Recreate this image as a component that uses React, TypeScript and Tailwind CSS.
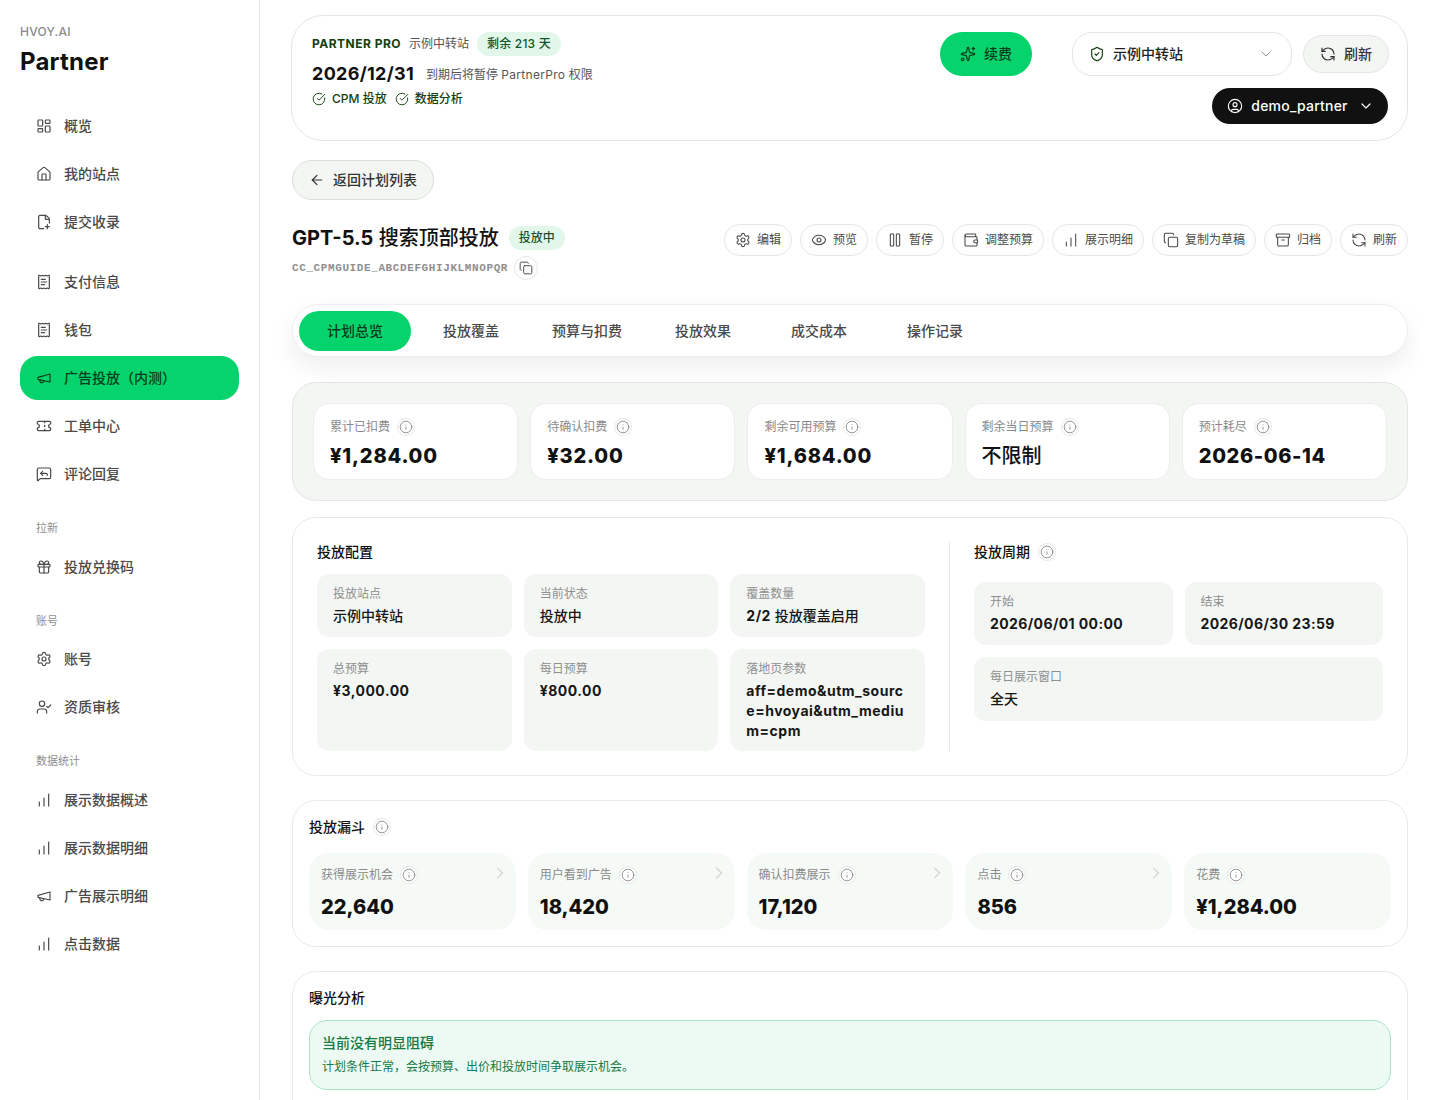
import {
	Archive,
	ArrowLeft,
	ChartNoAxesColumnIncreasing,
	ChevronDown,
	ChevronRight,
	CircleCheckBig,
	CircleUser,
	Copy,
	Eye,
	FilePlus2,
	Gift,
	House,
	Info,
	LayoutDashboard,
	MessageSquareReply,
	Pause,
	ReceiptText,
	RefreshCcw,
	Settings,
	ShieldCheck,
	Sparkles,
	Ticket,
	UserCheck,
	Wallet,
} from 'lucide-react';
import type { ComponentType, ReactNode } from 'react';

type Icon = ComponentType<{ size?: number; strokeWidth?: number; className?: string }>;

const font = "font-['Inter','Noto_Sans_CJK_SC',sans-serif]";

// older lucide megaphone, the one in the package now has a flag on it
function Horn({ size = 16, strokeWidth = 1.8 }: { size?: number; strokeWidth?: number }) {
	return (
		<svg
			width={size}
			height={size}
			viewBox="0 0 24 24"
			fill="none"
			stroke="currentColor"
			strokeWidth={strokeWidth}
			strokeLinecap="round"
			strokeLinejoin="round"
		>
			<path d="m3 11 18-5v12L3 14v-3z" />
			<path d="M11.6 16.8a3 3 0 1 1-5.8-1.6" />
		</svg>
	);
}

function NavItem({ icon: I, label, active }: { icon: Icon; label: string; active?: boolean }) {
	return (
		<div
			className={
				'flex h-11 items-center gap-3 rounded-[18px] px-4 text-sm font-medium ' +
				(active ? 'bg-[#05d36c] text-[#0a3d1c]' : 'text-[#4a4a4a]')
			}
		>
			<I size={16} strokeWidth={1.8} />
			<span>{label}</span>
		</div>
	);
}

function NavLabel({ label, className }: { label: string; className: string }) {
	return <div className={'px-4 text-[11px] leading-4 text-[#8f8f8f] ' + className}>{label}</div>;
}

function InfoDot() {
	return (
		<span className="flex h-[18px] w-[18px] shrink-0 items-center justify-center rounded-full border border-[#e6e8e6] bg-white text-[#777]">
			<Info size={14} strokeWidth={1.3} />
		</span>
	);
}

function ActionButton({ icon: I, label, w }: { icon: Icon; label: string; w: string }) {
	return (
		<button className={'flex h-8 items-center justify-center gap-1.5 rounded-full border border-[#e4e6e4] bg-white text-xs text-[#4a4a4a] ' + w}>
			<I size={16} strokeWidth={1.6} />
			<span>{label}</span>
		</button>
	);
}

function Metric({ label, value, track }: { label: string; value: string; track?: string }) {
	return (
		<div className="h-[77px] rounded-[16px] border border-[#eceeec] bg-white px-4 pt-[14px]">
			<div className="flex h-[18px] items-center gap-[7px] text-xs leading-[18px] text-[#8a8a8a]">
				<span>{label}</span>
				<InfoDot />
			</div>
			<div className={'mt-[5px] text-xl font-extrabold leading-[30px] text-[#111] ' + (track ?? 'tracking-[0.8px]')}>{value}</div>
		</div>
	);
}

function Field({ label, value, className }: { label: string; value: ReactNode; className?: string }) {
	return (
		<div className={'rounded-xl bg-[#f4f6f4] px-4 pt-[11px] ' + (className ?? 'h-[63px]')}>
			<div className="text-xs leading-[18px] text-[#8f8f8f]">{label}</div>
			<div className="mt-[3px] break-all text-sm font-medium leading-5 text-[#161616]">{value}</div>
		</div>
	);
}

function Num({ children, track }: { children: ReactNode; track?: string }) {
	return <span className={'font-bold ' + (track ?? 'tracking-[0.5px]')}>{children}</span>;
}

function Funnel({ label, value, arrow = true }: { label: string; value: string; arrow?: boolean }) {
	return (
		<div className="relative h-[77px] rounded-[20px] bg-[#f6faf7] px-3 pt-[13px]">
			<div className="flex h-[18px] items-center gap-[7px] text-xs leading-[18px] text-[#8a8a8a]">
				<span>{label}</span>
				<InfoDot />
			</div>
			<div className="mt-2 text-xl font-extrabold leading-[30px] text-[#111]">{value}</div>
			{arrow && <ChevronRight size={20} strokeWidth={1} className="absolute right-[6px] top-[10px] text-[#aaa]" />}
		</div>
	);
}

export default function App() {
	const tabs = ['计划总览', '投放覆盖', '预算与扣费', '投放效果', '成交成本', '操作记录'];

	return (
		<div className={'flex h-[1100px] overflow-hidden bg-white text-[#111] ' + font}>
			<aside className="h-full w-[260px] shrink-0 border-r border-[#e8e8e8] px-5 pt-[25px]">
				<div className="text-xs font-medium leading-[14px] tracking-[0.02em] text-[#8a8a8a]">HVOY.AI</div>
				<div className="mt-[5px] text-2xl font-bold leading-[36px] tracking-[0.2px] text-[#111]">Partner</div>
				<nav className="mt-[24px] flex flex-col gap-1">
					<NavItem icon={LayoutDashboard} label="概览" />
					<NavItem icon={House} label="我的站点" />
					<NavItem icon={FilePlus2} label="提交收录" />
					<div className="h-2" />
					<NavItem icon={ReceiptText} label="支付信息" />
					<NavItem icon={ReceiptText} label="钱包" />
					<NavItem icon={Horn} label="广告投放（内测）" active />
					<NavItem icon={Ticket} label="工单中心" />
					<NavItem icon={MessageSquareReply} label="评论回复" />
					<NavLabel label="拉新" className="mt-5 mb-[5px]" />
					<NavItem icon={Gift} label="投放兑换码" />
					<NavLabel label="账号" className="mt-5 mb-1" />
					<NavItem icon={Settings} label="账号" />
					<NavItem icon={UserCheck} label="资质审核" />
					<NavLabel label="数据统计" className="mt-5 mb-[5px]" />
					<NavItem icon={ChartNoAxesColumnIncreasing} label="展示数据概述" />
					<NavItem icon={ChartNoAxesColumnIncreasing} label="展示数据明细" />
					<NavItem icon={Horn} label="广告展示明细" />
					<NavItem icon={ChartNoAxesColumnIncreasing} label="点击数据" />
				</nav>
			</aside>

			<main className="min-w-0 flex-1 px-8 pt-[15px]">
				<header className="-ml-px flex h-[126px] justify-between rounded-[32px] border border-[#e4e6e4] bg-white pl-5 pr-[18px] pt-4">
					<div>
						<div className="flex h-6 items-center gap-2">
							<span className="text-xs font-bold tracking-[0.04em] text-[#14400f]">PARTNER PRO</span>
							<span className="text-xs text-[#555]">示例中转站</span>
							<span className="flex h-6 w-[84px] items-center justify-center rounded-full bg-[#e2f7e9] text-xs font-medium tracking-[0.2px] text-[#14532d]">剩余 213 天</span>
						</div>
						<div className="mt-[5px] flex h-[26px] items-center gap-3">
							<span className="text-lg font-bold tracking-[0.3px] text-[#111]">2026/12/31</span>
							<span className="mt-0.5 text-xs text-[#555]">到期后将暂停 <span className="tracking-[0.3px]">PartnerPro</span> 权限</span>
						</div>
						<div className="mt-[2px] flex h-5 items-center gap-2 text-xs font-medium text-[#14400f]">
							<span className="flex items-center gap-1.5"><CircleCheckBig size={14} strokeWidth={1.6} />CPM 投放</span>
							<span className="flex items-center gap-1.5"><CircleCheckBig size={14} strokeWidth={1.6} />数据分析</span>
						</div>
					</div>
					<div className="flex">
						<button className="flex h-11 w-[92px] items-center justify-center gap-2 rounded-[22px] bg-[#05d36c] text-sm font-medium text-[#0a3d1c]">
							<Sparkles size={16} strokeWidth={1.8} />
							续费
						</button>
						<div className="ml-10 flex flex-col items-end">
							<div className="flex items-center gap-[11px]">
								<div className="flex h-11 w-[220px] items-center rounded-[20px] border border-[#e4e6e4] bg-white pl-4 pr-[17px] text-sm font-medium text-[#222]">
									<ShieldCheck size={16} strokeWidth={1.7} className="mr-2 text-[#14400f]" />
									<span className="flex-1">示例中转站</span>
									<ChevronDown size={16} strokeWidth={1.4} className="text-[#8a8a8a]" />
								</div>
								<button className="flex h-[38px] w-[86px] items-center justify-center gap-2 rounded-full border border-[#e4e6e4] bg-[#f4f6f4] text-sm font-medium text-[#333]">
									<RefreshCcw size={16} strokeWidth={1.8} />
									刷新
								</button>
							</div>
							<button className="mr-[1px] mt-[12px] flex h-9 w-[176px] items-center justify-center gap-2 rounded-full bg-[#111] pl-px text-sm font-medium tracking-[0.2px] text-white">
								<CircleUser size={16} strokeWidth={1.7} />
								demo_partner
								<ChevronDown size={16} strokeWidth={1.8} className="ml-0.5" />
							</button>
						</div>
					</div>
				</header>

				<button className="mt-[19px] flex h-10 w-[142px] items-center justify-center gap-2 rounded-full border border-[#dcdedc] bg-[#f4f6f4] text-sm font-medium text-[#333]">
					<ArrowLeft size={16} strokeWidth={1.8} />
					返回计划列表
				</button>

				<section className="mt-6 flex h-14 justify-between">
					<div>
						<div className="flex h-7 items-center gap-2.5">
							<h1 className="text-xl font-medium leading-7 text-[#111]"><span className="font-bold">GPT-5.5</span> 搜索顶部投放</h1>
							<span className="flex h-6 w-14 items-center justify-center rounded-full bg-[#e2f7e9] text-xs font-medium text-[#14532d]">投放中</span>
						</div>
						<div className="mt-1 flex h-6 items-center gap-1.5">
							<span className="mt-px font-['Liberation_Mono',monospace] text-[11px] font-bold tracking-[0.6px] text-[#8f8f8f]">CC_CPMGUIDE_ABCDEFGHIJKLMNOPQR</span>
							<span className="flex h-6 w-6 items-center justify-center rounded-full border border-[#e6e8e6]">
								<Copy size={14} strokeWidth={1.6} className="text-[#444]" />
							</span>
						</div>
					</div>
					<div className="flex h-8 gap-2">
						<ActionButton icon={Settings} label="编辑" w="w-[68px]" />
						<ActionButton icon={Eye} label="预览" w="w-[68px]" />
						<ActionButton icon={Pause} label="暂停" w="w-[68px]" />
						<ActionButton icon={Wallet} label="调整预算" w="w-[92px]" />
						<ActionButton icon={ChartNoAxesColumnIncreasing} label="展示明细" w="w-[92px]" />
						<ActionButton icon={Copy} label="复制为草稿" w="w-[104px]" />
						<ActionButton icon={Archive} label="归档" w="w-[68px]" />
						<ActionButton icon={RefreshCcw} label="刷新" w="w-[68px]" />
					</div>
				</section>

				<div className="mt-6 flex h-[53px] gap-1 rounded-full border border-[#eeeeee] bg-white p-1.5 shadow-[0_10px_24px_rgba(0,0,0,0.07)]">
					{tabs.map((tab, i) => (
						<div
							key={tab}
							className={
								'flex h-10 w-[112px] items-center justify-center rounded-[20px] text-sm font-medium ' +
								(i === 0 ? 'bg-[#05d36c] text-[#0a3d1c]' : 'text-[#4a4a4a]')
							}
						>
							{tab}
						</div>
					))}
				</div>

				<section className="mt-[25px] grid h-[119px] grid-cols-5 gap-3 rounded-3xl border border-[#e4e6e4] bg-[#f4f6f4] p-5">
					<Metric label="累计已扣费" value="¥1,284.00" />
					<Metric label="待确认扣费" value="¥32.00" />
					<Metric label="剩余可用预算" value="¥1,684.00" />
					<Metric label="剩余当日预算" value="不限制" track="font-medium tracking-normal" />
					<Metric label="预计耗尽" value="2026-06-14" track="tracking-[0.6px]" />
				</section>

				<section className="mt-4 flex h-[259px] rounded-3xl border border-[#e8eae8] bg-white px-6 pt-6">
					<div className="w-[608px] shrink-0">
						<h2 className="h-5 text-sm font-medium leading-5">投放配置</h2>
						<div className="mt-3 grid grid-cols-3 gap-3">
							<Field label="投放站点" value="示例中转站" />
							<Field label="当前状态" value="投放中" />
							<Field label="覆盖数量" value={<><Num>2/2</Num> 投放覆盖启用</>} />
							<Field label="总预算" value={<Num>¥3,000.00</Num>} className="h-[102px]" />
							<Field label="每日预算" value={<Num>¥800.00</Num>} className="h-[102px]" />
							<Field label="落地页参数" value={<Num>aff=demo&utm_source=hvoyai&utm_medium=cpm</Num>} className="h-[102px]" />
						</div>
					</div>
					<div className="ml-6 h-[209px] w-px bg-[#e8eae8]" />
					<div className="ml-6 w-[409px] shrink-0">
						<h2 className="flex h-5 items-center gap-2 text-sm font-medium leading-5">投放周期<InfoDot /></h2>
						<div className="mt-5 grid grid-cols-2 gap-3">
							<Field label="开始" value={<Num track="tracking-[0.4px]">2026/06/01 00:00</Num>} />
							<Field label="结束" value={<Num track="tracking-[0.4px]">2026/06/30 23:59</Num>} />
							<Field label="每日展示窗口" value="全天" className="col-span-2 h-[64px]" />
						</div>
					</div>
				</section>

				<section className="mt-6 h-[147px] rounded-3xl border border-[#e8eae8] bg-white px-4 pt-4">
					<h2 className="flex h-5 items-center gap-2 text-sm font-medium leading-5">投放漏斗<InfoDot /></h2>
					<div className="mt-4 grid grid-cols-5 gap-3">
						<Funnel label="获得展示机会" value="22,640" />
						<Funnel label="用户看到广告" value="18,420" />
						<Funnel label="确认扣费展示" value="17,120" />
						<Funnel label="点击" value="856" />
						<Funnel label="花费" value="¥1,284.00" arrow={false} />
					</div>
				</section>

				<section className="mt-6 h-[160px] rounded-3xl border border-[#e8eae8] bg-white px-4 pt-4">
					<h2 className="h-5 text-sm font-medium leading-5">曝光分析</h2>
					<div className="mt-3 h-[70px] rounded-[18px] border border-[#a9e4c5] bg-[#edf9f3] px-3 pt-[12px]">
						<div className="text-sm font-medium leading-5 text-[#157a44]">当前没有明显阻碍</div>
						<div className="mt-[4px] text-xs leading-5 text-[#157a44]">计划条件正常，会按预算、出价和投放时间争取展示机会。</div>
					</div>
				</section>
			</main>
		</div>
	);
}
